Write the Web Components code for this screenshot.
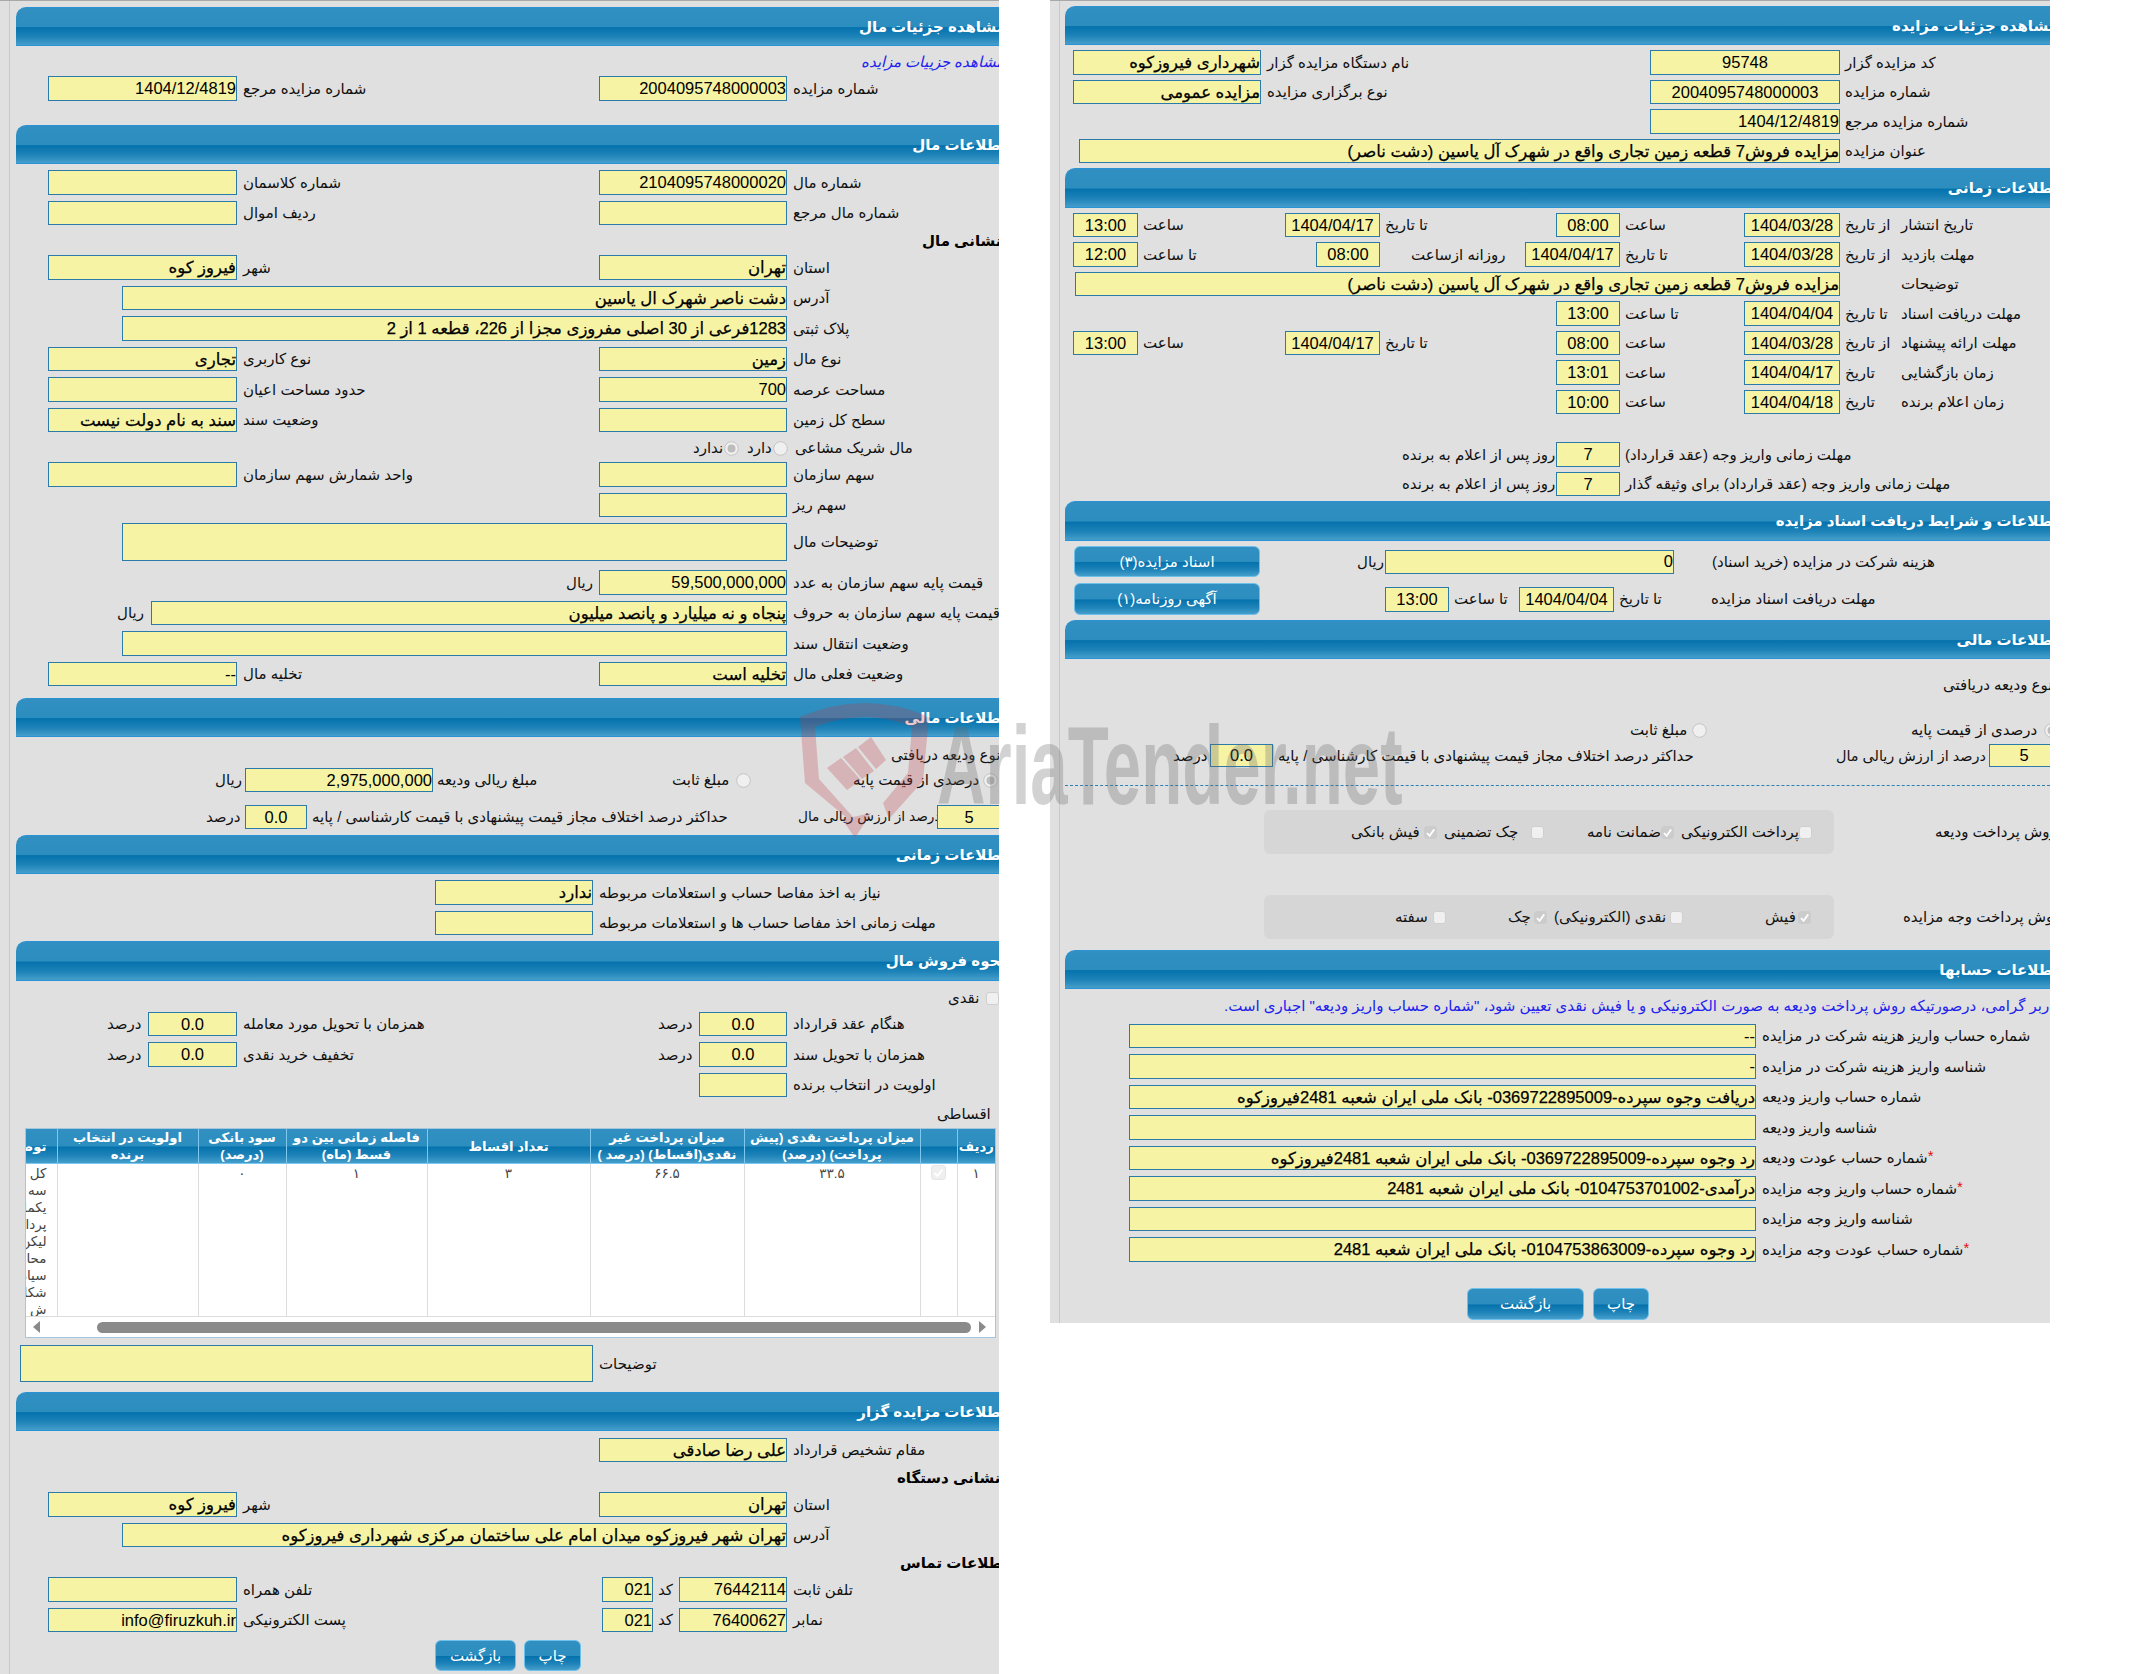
<!DOCTYPE html>
<html lang="fa">
<head>
<meta charset="utf-8">
<title>مشاهده جزئیات مزایده</title>
<style>
  html, body { margin: 0; padding: 0; background: #fff; }
  body {
    width: 2150px; height: 1674px; overflow: hidden; position: relative;
    font-family: "Liberation Sans", "DejaVu Sans", sans-serif;
    color: #111;
  }
  .sheet { display: flex; align-items: flex-start; }
</style>
</head>
<body>
<div class="sheet">

<x-panel w="999" h="1674">
  <x-head t="6" l="16" p="10">مشاهده جزئیات مال</x-head>
  <x-r h="20" t="6"><x-l g="861" w="200" k="link">مشاهده جزییات مزایده</x-l></x-r>
  <x-r h="25" t="4"><x-i g="48" w="189">1404/12/4819</x-i><x-l g="6" w="356">شماره مزایده مرجع</x-l><x-i w="188">2004095748000003</x-i><x-l g="6" w="300">شماره مزایده</x-l></x-r>
  <x-head t="24" l="16" p="10">اطلاعات مال</x-head>
  <x-r h="25"><x-i g="48" w="189"></x-i><x-l g="6" w="356">شماره کلاسمان</x-l><x-i w="188">2104095748000020</x-i><x-l g="6" w="300">شماره مال</x-l></x-r>
  <x-r h="24"><x-i g="48" w="189"></x-i><x-l g="6" w="356">ردیف اموال</x-l><x-i w="188"></x-i><x-l g="6" w="300">شماره مال مرجع</x-l></x-r>
  <x-r h="20"><x-l g="922" w="90" k="bold">نشانی مال</x-l></x-r>
  <x-r h="25" t="4"><x-i g="48" w="189">فیروز کوه</x-i><x-l g="6" w="356">شهر</x-l><x-i w="188">تهران</x-i><x-l g="6" w="300">استان</x-l></x-r>
  <x-r h="24"><x-i g="122" w="665">دشت ناصر شهرک ال یاسین</x-i><x-l g="6" w="300">آدرس</x-l></x-r>
  <x-r h="25"><x-i g="122" w="665">1283فرعی از 30 اصلی مفروزی مجزا از 226، قطعه 1 از 2</x-i><x-l g="6" w="300">پلاک ثبتی</x-l></x-r>
  <x-r h="24"><x-i g="48" w="189">تجاری</x-i><x-l g="6" w="356">نوع کاربری</x-l><x-i w="188">زمین</x-i><x-l g="6" w="300">نوع مال</x-l></x-r>
  <x-r h="25"><x-i g="48" w="189"></x-i><x-l g="6" w="356">حدود مساحت اعیان</x-l><x-i w="188">700</x-i><x-l g="6" w="300">مساحت عرصه</x-l></x-r>
  <x-r h="24"><x-i g="48" w="189">سند به نام دولت نیست</x-i><x-l g="6" w="356">وضعیت سند</x-l><x-i w="188"></x-i><x-l g="6" w="300">سطح کل زمین</x-l></x-r>
  <x-r h="20"><x-l g="693" w="31">ندارد</x-l><x-o k="radio" on></x-o><x-l g="8" w="26">دارد</x-l><x-o k="radio"></x-o><x-l g="7" w="300">مال شریک مشاعی</x-l></x-r>
  <x-r h="25" t="4"><x-i g="48" w="189"></x-i><x-l g="6" w="356">واحد شمارش سهم سازمان</x-l><x-i w="188"></x-i><x-l g="6" w="300">سهم سازمان</x-l></x-r>
  <x-r h="24"><x-i g="599" w="188"></x-i><x-l g="6" w="300">سهم ریز</x-l></x-r>
  <x-r h="38"><x-i g="122" w="665"></x-i><x-l g="6" w="300">توضیحات مال</x-l></x-r>
  <x-r h="25" t="9"><x-l g="566" w="33">ریال</x-l><x-i w="188">59,500,000,000</x-i><x-l g="6" w="300">قیمت پایه سهم سازمان به عدد</x-l></x-r>
  <x-r h="24"><x-l g="117" w="34">ریال</x-l><x-i w="636">پنجاه و نه میلیارد و پانصد میلیون</x-i><x-l g="6" w="300">قیمت پایه سهم سازمان به حروف</x-l></x-r>
  <x-r h="25"><x-i g="122" w="665"></x-i><x-l g="6" w="300">وضعیت انتقال سند</x-l></x-r>
  <x-r h="24"><x-i g="48" w="189">--</x-i><x-l g="6" w="356">تخلیه مال</x-l><x-i w="188">تخلیه است</x-i><x-l g="6" w="300">وضعیت فعلی مال</x-l></x-r>
  <x-head t="12" l="16" p="10">اطلاعات مالی</x-head>
  <x-r h="20" t="8"><x-l g="891" w="200">نوع ودیعه دریافتی</x-l></x-r>
  <x-r h="24" t="3"><x-l g="215" w="30">ریال</x-l><x-i w="188">2,975,000,000</x-i><x-l g="4" w="235">مبلغ ریالی ودیعه</x-l><x-l w="64">مبلغ ثابت</x-l><x-o k="radio"></x-o><x-l g="102" w="130">درصدی از قیمت پایه</x-l><x-o k="radio" on></x-o></x-r>
  <x-r h="24" t="13"><x-l g="206" w="39">درصد</x-l><x-i w="62" c>0.0</x-i><x-l g="5" w="486">حداکثر درصد اختلاف مجاز قیمت پیشنهادی با قیمت کارشناسی / پایه</x-l><x-l w="139" style="font-size:13.7px">درصد از ارزش ریالی مال</x-l><x-i w="64" c>5</x-i></x-r>
  <x-head t="6" l="16" p="10">اطلاعات زمانی</x-head>
  <x-r h="25"><x-i g="435" w="158">ندارد</x-i><x-l g="6" w="400">نیاز به اخذ مفاصا حساب و استعلامات مربوطه</x-l></x-r>
  <x-r h="24"><x-i g="435" w="158"></x-i><x-l g="6" w="400">مهلت زمانی اخذ مفاصا حساب ها و استعلامات مربوطه</x-l></x-r>
  <x-head t="6" l="16" h="40" p="10">نحوه فروش مال</x-head>
  <x-r h="20" t="7"><x-l g="948" w="38">نقدی</x-l><x-o></x-o></x-r>
  <x-r h="24" t="4"><x-l g="107" w="41">درصد</x-l><x-i w="89" c>0.0</x-i><x-l g="6" w="415">همزمان با تحویل مورد معامله</x-l><x-l w="41">درصد</x-l><x-i w="88" c>0.0</x-i><x-l g="6" w="300">هنگام عقد قرارداد</x-l></x-r>
  <x-r h="25"><x-l g="107" w="41">درصد</x-l><x-i w="89" c>0.0</x-i><x-l g="6" w="415">تخفیف خرید نقدی</x-l><x-l w="41">درصد</x-l><x-i w="88" c>0.0</x-i><x-l g="6" w="300">همزمان با تحویل سند</x-l></x-r>
  <x-r h="24"><x-i g="699" w="88"></x-i><x-l g="6" w="300">اولویت در انتخاب برنده</x-l></x-r>
  <x-r h="20" t="7"><x-l g="937" w="70">اقساطی</x-l></x-r>
  <x-r h="210" t="4"><x-table g="25"></x-table></x-r>
  <x-r h="37" t="7"><x-i g="20" w="573"></x-i><x-l g="6" w="300">توضیحات</x-l></x-r>
  <x-head t="10" l="16" p="10">اطلاعات مزایده گزار</x-head>
  <x-r h="24" t="7"><x-i g="599" w="188">علی رضا صادقی</x-i><x-l g="6" w="300">مقام تشخیص قرارداد</x-l></x-r>
  <x-r h="20"><x-l g="897" w="120" k="bold">نشانی دستگاه</x-l></x-r>
  <x-r h="25" t="4"><x-i g="48" w="189">فیروز کوه</x-i><x-l g="6" w="356">شهر</x-l><x-i w="188">تهران</x-i><x-l g="6" w="300">استان</x-l></x-r>
  <x-r h="24"><x-i g="122" w="665">تهران شهر فیروزکوه میدان امام علی ساختمان مرکزی شهرداری فیروزکوه</x-i><x-l g="6" w="300">آدرس</x-l></x-r>
  <x-r h="20"><x-l g="900" w="120" k="bold">اطلاعات تماس</x-l></x-r>
  <x-r h="25" t="4"><x-i g="48" w="189"></x-i><x-l g="6" w="359">تلفن همراه</x-l><x-i w="51">021</x-i><x-l g="5" w="21">کد</x-l><x-i w="108">76442114</x-i><x-l g="6" w="200">تلفن ثابت</x-l></x-r>
  <x-r h="24"><x-i g="48" w="189">info@firuzkuh.ir</x-i><x-l g="6" w="359">پست الکترونیکی</x-l><x-i w="51">021</x-i><x-l g="5" w="21">کد</x-l><x-i w="108">76400627</x-i><x-l g="6" w="200">نمابر</x-l></x-r>
  <x-r h="31" t="8"><x-b g="435" w="81">بازگشت</x-b><x-b g="8" w="57">چاپ</x-b></x-r>
</x-panel>

<x-panel w="1000" h="1323" style="margin-left:51px">
  <x-head t="5" l="15" p="7">مشاهده جزئیات مزایده</x-head>
  <x-r h="25" t="5"><x-i g="23" w="188">شهرداری فیروزکوه</x-i><x-l g="6" w="383">نام دستگاه مزایده گزار</x-l><x-i w="190" c>95748</x-i><x-l g="5" w="150">کد مزایده گزار</x-l></x-r>
  <x-r h="24" t="5"><x-i g="23" w="188">مزایده عمومی</x-i><x-l g="6" w="383">نوع برگزاری مزایده</x-l><x-i w="190" c>2004095748000003</x-i><x-l g="5" w="150">شماره مزایده</x-l></x-r>
  <x-r h="25" t="5"><x-i g="600" w="190">1404/12/4819</x-i><x-l g="5" w="150">شماره مزایده مرجع</x-l></x-r>
  <x-r h="24" t="5"><x-i g="29" w="761">مزایده فروش7 قطعه زمین تجاری واقع در شهرک آل یاسین (دشت ناصر)</x-i><x-l g="5" w="150">عنوان مزایده</x-l></x-r>
  <x-head t="5" l="15" h="40" p="7">اطلاعات زمانی</x-head>
  <x-r h="24" t="5"><x-i g="23" w="65">13:00</x-i><x-l g="5" w="142">ساعت</x-l><x-i w="95">1404/04/17</x-i><x-l g="5" w="171">تا تاریخ</x-l><x-i w="64">08:00</x-i><x-l g="5" w="119">ساعت</x-l><x-i w="96">1404/03/28</x-i><x-l g="5" w="56">از تاریخ</x-l><x-l w="100">تاریخ انتشار</x-l></x-r>
  <x-r h="25" t="5"><x-i g="23" w="65">12:00</x-i><x-l g="5" w="173">تا ساعت</x-l><x-i w="64">08:00</x-i><x-l g="31" w="114">روزانه ازساعت</x-l><x-i w="95">1404/04/17</x-i><x-l g="5" w="119">تا تاریخ</x-l><x-i w="96">1404/03/28</x-i><x-l g="5" w="56">از تاریخ</x-l><x-l w="100">مهلت بازدید</x-l></x-r>
  <x-r h="24" t="5"><x-i g="25" w="765">مزایده فروش7 قطعه زمین تجاری واقع در شهرک آل یاسین (دشت ناصر)</x-i><x-l g="61" w="100">توضیحات</x-l></x-r>
  <x-r h="25" t="5"><x-i g="506" w="64">13:00</x-i><x-l g="5" w="119">تا ساعت</x-l><x-i w="96">1404/04/04</x-i><x-l g="5" w="56">تا تاریخ</x-l><x-l w="100">مهلت دریافت اسناد</x-l></x-r>
  <x-r h="24" t="5"><x-i g="23" w="65">13:00</x-i><x-l g="5" w="142">ساعت</x-l><x-i w="95">1404/04/17</x-i><x-l g="5" w="171">تا تاریخ</x-l><x-i w="64">08:00</x-i><x-l g="5" w="119">ساعت</x-l><x-i w="96">1404/03/28</x-i><x-l g="5" w="56">از تاریخ</x-l><x-l w="100">مهلت ارائه پیشنهاد</x-l></x-r>
  <x-r h="25" t="5"><x-i g="506" w="64">13:01</x-i><x-l g="5" w="119">ساعت</x-l><x-i w="96">1404/04/17</x-i><x-l g="5" w="56">تاریخ</x-l><x-l w="100">زمان بازگشایی</x-l></x-r>
  <x-r h="24" t="5"><x-i g="506" w="64">10:00</x-i><x-l g="5" w="119">ساعت</x-l><x-i w="96">1404/04/18</x-i><x-l g="5" w="56">تاریخ</x-l><x-l w="100">زمان اعلام برنده</x-l></x-r>
  <x-r h="25" t="28"><x-l g="352" w="152" k="end">روز پس از اعلام به برنده</x-l><x-i g="2" w="64" c>7</x-i><x-l g="5" w="300">مهلت زمانی واریز وجه (عقد قرارداد)</x-l></x-r>
  <x-r h="24" t="5"><x-l g="352" w="152" k="end">روز پس از اعلام به برنده</x-l><x-i g="2" w="64" c>7</x-i><x-l g="5" w="320">مهلت زمانی واریز وجه (عقد قرارداد) برای وثیقه گذار</x-l></x-r>
  <x-head t="5" l="15" h="40" p="7">اطلاعات و شرایط دریافت اسناد مزایده</x-head>
  <x-r h="31" t="5"><x-b g="24" w="186">اسناد مزایده(۳)</x-b><x-l g="97" w="28">ریال</x-l><x-i w="289" hh="24">0</x-i><x-l g="38" w="280">هزینه شرکت در مزایده (خرید اسناد)</x-l></x-r>
  <x-r h="32" t="6"><x-b g="24" w="186">آگهی روزنامه(۱)</x-b><x-i g="125" w="64" hh="25">13:00</x-i><x-l g="5" w="65">تا ساعت</x-l><x-i w="95" hh="25">1404/04/04</x-i><x-l g="5" w="92">تا تاریخ</x-l><x-l w="280">مهلت دریافت اسناد مزایده</x-l></x-r>
  <x-head t="5" l="15" p="7">اطلاعات مالی</x-head>
  <x-r h="20" t="16"><x-l g="893" w="200">نوع ودیعه دریافتی</x-l></x-r>
  <x-r h="20" t="25"><x-l g="580" w="62">مبلغ ثابت</x-l><x-o k="radio"></x-o><x-l g="204" w="133">درصدی از قیمت پایه</x-l><x-o k="radio" on></x-o></x-r>
  <x-r h="23" t="4"><x-l g="123" w="37">درصد</x-l><x-i w="63" c>0.0</x-i><x-l g="5" w="558">حداکثر درصد اختلاف مجاز قیمت پیشنهادی با قیمت کارشناسی / پایه</x-l><x-l w="153" style="font-size:14.4px">درصد از ارزش ریالی مال</x-l><x-i w="70" c>5</x-i></x-r>
  <x-rule></x-rule>
  <x-r h="44" t="24">
    <x-box g="214" w="570"><x-l g="87" w="73">فیش بانکی</x-l><x-o on></x-o><x-l g="7" w="87">چک تضمینی</x-l><x-o></x-o><x-l g="43" w="74">ضمانت نامه</x-l><x-o on></x-o><x-l g="7" w="118">پرداخت الکترونیکی</x-l><x-o></x-o></x-box>
    <x-l g="101" w="200">روش پرداخت ودیعه</x-l>
  </x-r>
  <x-r h="44" t="41">
    <x-box g="214" w="570"><x-l g="131" w="38">سفته</x-l><x-o></x-o><x-l g="62" w="26">چک</x-l><x-o on></x-o><x-l g="7" w="116">نقدی (الکترونیکی)</x-l><x-o></x-o><x-l g="82" w="33">فیش</x-l><x-o on></x-o></x-box>
    <x-l g="69" w="200">روش پرداخت وجه مزایده</x-l>
  </x-r>
  <x-head t="11" l="15" p="7">اطلاعات حسابها</x-head>
  <x-r h="20" t="7"><x-l g="174" w="1000" k="link2">کاربر گرامی، درصورتیکه روش پرداخت ودیعه به صورت الکترونیکی و یا فیش نقدی تعیین شود، "شماره حساب واریز ودیعه" اجباری است.</x-l></x-r>
  <x-r h="24" t="8"><x-i g="79" w="627">--</x-i><x-l g="6" w="280">شماره حساب واریز هزینه شرکت در مزایده</x-l></x-r>
  <x-r h="25"><x-i g="79" w="627">-</x-i><x-l g="6" w="280">شناسه واریز هزینه شرکت در مزایده</x-l></x-r>
  <x-r h="24"><x-i g="79" w="627">دریافت وجوه سپرده-0369722895009- بانک ملی ایران شعبه 2481فیروزکوه</x-i><x-l g="6" w="280">شماره حساب واریز ودیعه</x-l></x-r>
  <x-r h="25"><x-i g="79" w="627"></x-i><x-l g="6" w="280">شناسه واریز ودیعه</x-l></x-r>
  <x-r h="24"><x-i g="79" w="627">رد وجوه سپرده-0369722895009- بانک ملی ایران شعبه 2481فیروزکوه</x-i><x-l g="6" w="280"><x-star></x-star>شماره حساب عودت ودیعه</x-l></x-r>
  <x-r h="25"><x-i g="79" w="627">درآمدی-0104753701002- بانک ملی ایران شعبه 2481</x-i><x-l g="6" w="280"><x-star></x-star>شماره حساب واریز وجه مزایده</x-l></x-r>
  <x-r h="24"><x-i g="79" w="627"></x-i><x-l g="6" w="280">شناسه واریز وجه مزایده</x-l></x-r>
  <x-r h="25"><x-i g="79" w="627">رد وجوه سپرده-0104753863009- بانک ملی ایران شعبه 2481</x-i><x-l g="6" w="280"><x-star></x-star>شماره حساب عودت وجه مزایده</x-l></x-r>
  <x-r h="32" t="26"><x-b g="417" w="117">بازگشت</x-b><x-b g="9" w="56">چاپ</x-b></x-r>
</x-panel>

</div>
<x-mark></x-mark>

<script>
const BAR = 'linear-gradient(to bottom,#3190c1 0%,#2c8dbf 50%,#0572ad 53%,#1e83b8 78%,#459ecb 100%)';

// spacing attributes shared by everything that sits in a row
function place(el) {
    if (el.hasAttribute('g')) el.style.marginLeft = el.getAttribute('g') + 'px';
    if (el.hasAttribute('w')) el.style.width = el.getAttribute('w') + 'px';
}

class XPanel extends HTMLElement {
    connectedCallback() {
        this.style.width = this.getAttribute('w') + 'px';
        this.style.height = this.getAttribute('h') + 'px';
        this.attachShadow({ mode: 'open' }).innerHTML = `
      <style>
        :host {
          display: block; flex: none; box-sizing: border-box; overflow: hidden;
          border-top: 1px solid #a8a8a8;
          background: linear-gradient(#c9c9c9,#c9c9c9) 9px 0 / 1px 100% no-repeat #e0e0e0;
        }
      </style>
      <slot></slot>`;
    }
}

class XHead extends HTMLElement {
    connectedCallback() {
        this.style.marginTop = this.getAttribute('t') + 'px';
        this.style.marginLeft = this.getAttribute('l') + 'px';
        this.style.height = (this.getAttribute('h') || 39) + 'px';
        this.style.paddingRight = this.getAttribute('p') + 'px';
        this.attachShadow({ mode: 'open' }).innerHTML = `
      <style>
        :host {
          display: flex; align-items: center; box-sizing: border-box; width: 1000px;
          direction: rtl; white-space: nowrap;
          background: ${BAR}; border-top: 1px solid #2a93d6; border-bottom: 1px solid #2a93d6;
          border-top-left-radius: 10px;
          color: #fff; font-size: 15px; font-weight: bold;
        }
      </style>
      <slot></slot>`;
    }
}

class XRow extends HTMLElement {
    connectedCallback() {
        this.style.height = this.getAttribute('h') + 'px';
        this.style.marginTop = (this.getAttribute('t') || 6) + 'px';
        this.attachShadow({ mode: 'open' }).innerHTML = `
      <style>
        :host { display: flex; align-items: center; width: 1200px; }
      </style>
      <slot></slot>`;
    }
}

class XLabel extends HTMLElement {
    connectedCallback() {
        place(this);
        this.attachShadow({ mode: 'open' }).innerHTML = `
      <style>
        :host {
          display: block; flex: none; white-space: nowrap; text-align: left;
          font-size: 15px; color: #111; line-height: 20px;
        }
        :host([k=link]) { color: #2222ee; font-style: italic; }
        :host([k=link2]) { color: #2222ee; }
        :host([k=bold]) { font-weight: bold; color: #000; }
        :host([k=end]) { text-align: right; }
        div { display: inline-block; direction: rtl; }
      </style>
      <div><slot></slot></div>`;
    }
}

class XInput extends HTMLElement {
    connectedCallback() {
        place(this);
        if (this.hasAttribute('hh')) this.style.height = this.getAttribute('hh') + 'px';
        const text = this.textContent;
        // dates and times sit in the middle of their box
        if (/^\d{4}\/\d\d\/\d\d$|^\d\d:\d\d$/.test(text)) this.setAttribute('c', '');
        if (/[\u0600-\u06ff]/.test(text)) this.setAttribute('fa', '');
        this.attachShadow({ mode: 'open' }).innerHTML = `
      <style>
        :host {
          display: flex; flex: none; align-items: center; justify-content: flex-start;
          box-sizing: border-box; height: 100%; overflow: hidden;
          direction: rtl; white-space: nowrap;
          background: #f6f3a4; border: 1px solid #2a7aaa;
          font-size: 16.5px; color: #000;
        }
        :host([c]) { justify-content: center; }
        :host([fa]) { -webkit-text-stroke: .25px #000; }
      </style>
      <slot></slot>`;
    }
}

class XButton extends HTMLElement {
    connectedCallback() {
        place(this);
        this.attachShadow({ mode: 'open' }).innerHTML = `
      <style>
        :host {
          display: flex; flex: none; align-items: center; justify-content: center;
          box-sizing: border-box; height: 100%; direction: rtl; white-space: nowrap;
          background: ${BAR}; border: 1px solid #6cc0ea; border-radius: 6px;
          color: #fff; font-size: 15px;
        }
      </style>
      <slot></slot>`;
    }
}

// disabled radio or checkbox, as the browser paints them on a read-only form
class XOption extends HTMLElement {
    connectedCallback() {
        place(this);
        const radio = this.getAttribute('k') === 'radio';
        const on = this.hasAttribute('on');
        const size = radio ? 15 : 13;
        let mark = '';
        if (radio && on) mark = '<circle cx="7.5" cy="7.5" r="4" fill="#bdbdbd"/>';
        if (!radio && on) mark = '<path d="M3 7l2.6 2.8L10.2 3.4" fill="none" stroke="#fff" stroke-width="1.8"/>';
        const box = radio
            ? '<circle cx="7.5" cy="7.5" r="6.8" fill="#f0f0f0" stroke="#c4c4c4"/>'
            : `<rect x=".5" y=".5" width="12" height="12" rx="2.5" fill="${on ? '#cccccc' : '#f0f0f0'}" stroke="${on ? '#cccccc' : '#cfcfcf'}"/>`;
        this.attachShadow({ mode: 'open' }).innerHTML = `
      <style>
        :host { display: block; flex: none; width: ${size}px; height: ${size}px; line-height: 0; }
      </style>
      <svg width="${size}" height="${size}" viewBox="0 0 ${size} ${size}">${box}${mark}</svg>`;
    }
}

class XBox extends HTMLElement {
    connectedCallback() {
        place(this);
        this.attachShadow({ mode: 'open' }).innerHTML = `
      <style>
        :host {
          display: flex; flex: none; align-items: center; box-sizing: border-box; height: 100%;
          background: #d6d6d6; border-radius: 6px;
        }
      </style>
      <slot></slot>`;
    }
}

class XRule extends HTMLElement {
    connectedCallback() {
        this.attachShadow({ mode: 'open' }).innerHTML = `
      <style>
        :host { display: block; margin: 18px 0 0 15px; height: 0; width: 985px; border-top: 1px dashed #2c80b4; }
      </style>`;
    }
}

class XStar extends HTMLElement {
    connectedCallback() {
        this.attachShadow({ mode: 'open' }).innerHTML = `
      <style>
        :host { color: #e01010; position: relative; top: -2px; }
      </style>*`;
    }
}

class XTable extends HTMLElement {
    connectedCallback() {
        place(this);
        const head = ['ردیف', '', 'میزان پرداخت نقدی (پیش پرداخت) (درصد)', 'میزان پرداخت غیر نقدی(اقساط) (درصد )',
            'تعداد اقساط', 'فاصله زمانی بین دو قسط (ماه)', 'سود بانکی (درصد)', 'اولویت در انتخاب برنده', 'توضیحات'];
        const widths = [38, 37, 176, 154, 163, 141, 88, 141, 80];
        const notes = ['کل', 'سه', 'یکماهه', 'پرداخت', 'لیکن', 'محاسبه', 'سیاه', 'شکل', 'ش'];
        const check = '<svg width="15" height="15" viewBox="0 0 15 15"><rect x=".5" y=".5" width="14" height="14" rx="2.5" fill="#efefef" stroke="#e6e6e6"/><path d="M3.5 8l3 3 5-6.5" fill="none" stroke="#fff" stroke-width="2"/></svg>';
        this.attachShadow({ mode: 'open' }).innerHTML = `
      <style>
        :host {
          display: block; flex: none; box-sizing: border-box; width: 971px; height: 210px;
          background: #fff; border: 1px solid #a4c6de; overflow: hidden;
        }
        .clip { direction: rtl; overflow: hidden; height: 187px; border-bottom: 1px solid #dcdcdc; }
        table { border-collapse: collapse; table-layout: fixed; width: 1018px; }
        th {
          height: 34px; padding: 0; background: ${BAR}; color: #fff; font-size: 13.2px; line-height: 17px;
          border-left: 1px solid #7cc8ee; border-bottom: 1px solid #7cc8ee;
        }
        td {
          height: 151px; padding: 1px 0 0; vertical-align: top; text-align: center; color: #444;
          font-size: 13.5px; line-height: 17px; border-left: 1px solid #dcdcdc;
        }
        td.notes { text-align: right; padding-right: 10px; overflow: hidden; white-space: nowrap; }
        .bar { display: flex; align-items: center; height: 20px; }
        .thumb { flex: 1; height: 11px; margin: 0 8px 0 7px; background: #8a8a8a; border-radius: 6px; }
        .arrow { width: 0; height: 0; border: 6px solid transparent; }
        .left { border-right: 7px solid #8a8a8a; border-left: 0; margin-left: 7px; }
        .right { border-left: 7px solid #8a8a8a; border-right: 0; margin-right: 7px; }
        .lead { width: 50px; }
        .tail { width: 2px; }
      </style>
      <div class="clip">
        <table>
          <colgroup>${widths.map(w => `<col style="width:${w}px">`).join('')}</colgroup>
          <tr>${head.map(h => `<th>${h}</th>`).join('')}</tr>
          <tr>
            <td>۱</td><td>${check}</td><td>۳۳.۵</td><td>۶۶.۵</td><td>۳</td><td>۱</td><td>۰</td><td></td>
            <td class="notes">${notes.join('<br>')}</td>
          </tr>
        </table>
      </div>
      <div class="bar">
        <span class="arrow left"></span><span class="lead"></span><span class="thumb"></span><span class="arrow right"></span><span class="tail"></span>
      </div>`;
    }
}

// site watermark lying over both panels
class XMark extends HTMLElement {
    connectedCallback() {
        this.attachShadow({ mode: 'open' }).innerHTML = `
      <style>
        :host { position: absolute; left: 795px; top: 695px; width: 620px; height: 150px; pointer-events: none; }
        svg { position: absolute; left: 0; top: 0; }
        .word {
          position: absolute; left: 142px; top: 11px; white-space: nowrap; transform-origin: 0 0; transform: scaleX(.6);
          font: bold 112px/120px "Liberation Sans", sans-serif; color: rgba(105,105,105,.3);
        }
      </style>
      <svg width="145" height="150" viewBox="0 0 145 150">
        <g fill="rgba(185,60,70,.27)">
          <path d="M5 22Q70-6 134 22L128 86 94 124 88 108 113 78 117 32Q70 12 20 32L24 84 58 122 76 118 60 143 47 124 52 123 10 88Z"/>
          <path d="M32 73 46 63 66 85 52 95Z"/>
          <path d="M48 62 61 53 79 76 67 84Z"/>
          <path d="M63 52 76 42 91 65 81 74Z"/>
        </g>
      </svg>
      <div class="word">AriaTender.net</div>`;
    }
}

customElements.define('x-panel', XPanel);
customElements.define('x-head', XHead);
customElements.define('x-r', XRow);
customElements.define('x-l', XLabel);
customElements.define('x-i', XInput);
customElements.define('x-b', XButton);
customElements.define('x-o', XOption);
customElements.define('x-box', XBox);
customElements.define('x-rule', XRule);
customElements.define('x-star', XStar);
customElements.define('x-table', XTable);
customElements.define('x-mark', XMark);
</script>
</body>
</html>
